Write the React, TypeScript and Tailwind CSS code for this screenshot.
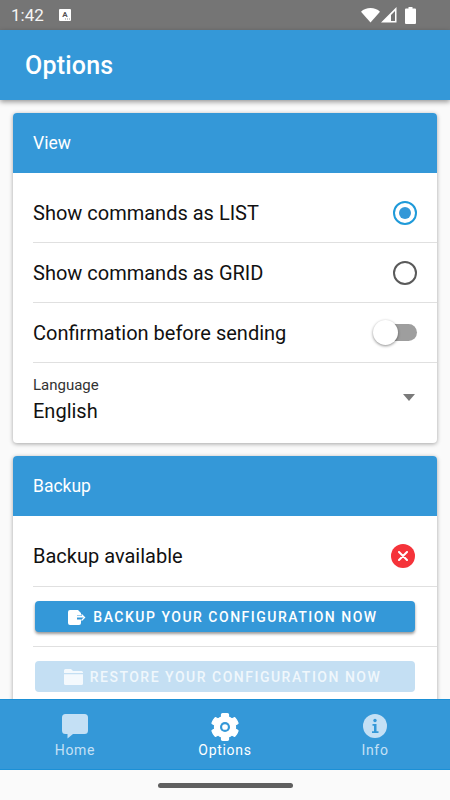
import React from "react";

const font = { fontFamily: "Roboto, sans-serif" };

function Row({ h, divider = true, children }: { h: string; divider?: boolean; children: React.ReactNode }) {
  return (
    <div className={`ml-5 flex items-center justify-between pr-5 ${h} ${divider ? "border-b border-[#e0e0e0]" : ""}`}>
      {children}
    </div>
  );
}

function Card({ title, children }: { title: string; children: React.ReactNode }) {
  return (
    <section className="mx-[13px] shrink-0 overflow-hidden rounded-[4px] bg-white shadow-[0_1px_4px_rgba(0,0,0,0.35)]">
      <div className="flex h-[60px] items-center bg-[#3498d8] px-5 text-[17.5px] text-white">{title}</div>
      {children}
    </section>
  );
}

function Gear() {
  return (
    <svg width="28" height="28" viewBox="0 0 512 512" fill="#fff">
      <path
        stroke="#fff"
        strokeWidth="22"
        strokeLinejoin="round"
        d="M487.4 315.7l-42.600-24.600c4.300-23.200 4.300-47 0-70.200l42.600-24.600c4.900-2.800 7.100-8.600 5.500-14-11.100-35.600-30-67.800-54.700-94.600-3.800-4.100-10-5.100-14.800-2.300L380.800 110c-17.900-15.400-38.500-27.300-60.800-35.100V25.800c0-5.600-3.900-10.500-9.400-11.700-36.700-8.200-74.300-7.800-109.200 0-5.500 1.200-9.400 6.100-9.400 11.700V75c-22.200 7.900-42.800 19.800-60.800 35.100L88.700 85.500c-4.900-2.800-11-1.900-14.800 2.300-24.700 26.700-43.600 58.900-54.700 94.600-1.700 5.400.6 11.200 5.500 14L67.300 221c-4.300 23.200-4.300 47 0 70.200l-42.600 24.600c-4.900 2.800-7.100 8.600-5.500 14 11.100 35.600 30 67.800 54.700 94.600 3.800 4.100 10 5.100 14.800 2.300l42.600-24.600c17.900 15.400 38.500 27.300 60.800 35.100v49.200c0 5.600 3.900 10.500 9.400 11.700 36.700 8.200 74.300 7.800 109.200 0 5.500-1.200 9.400-6.100 9.400-11.700v-49.200c22.200-7.900 42.800-19.800 60.800-35.100l42.600 24.600c4.900 2.800 11 1.900 14.800-2.300 24.700-26.700 43.600-58.900 54.700-94.600 1.500-5.500-.7-11.300-5.600-14.100z"
      />
      <circle cx="256" cy="256" r="92" fill="#3498d8" />
      <circle cx="256" cy="256" r="52" fill="#fff" />
    </svg>
  );
}

export default function App() {
  return (
    <div className="flex h-[800px] w-[450px] flex-col overflow-hidden bg-[#fafafa]" style={font}>
      {/* Status bar */}
      <div className="flex h-[30px] shrink-0 items-center bg-[#757575] pl-[11px] pr-[34px] text-white">
        <span className="text-[17px] leading-none text-[#f5f5f5]">1:42</span>
        <svg className="ml-[15px]" width="12" height="12" viewBox="0 0 12 12">
          <rect width="12" height="12" rx="1" fill="#fff" />
          <text x="6" y="8" textAnchor="middle" fontSize="8" fontWeight="700" fill="#555" fontFamily="Roboto, sans-serif">A</text>
          <path d="M6 10h1M8 10h1M10 10h1" stroke="#999" strokeWidth="1" />
        </svg>
        <div className="ml-auto flex items-center">
          <svg width="19" height="16" viewBox="0 0 19 16">
            <path d="M0 4.800C2.500 2.200 5.800 1 9.500 1s7 1.200 9.500 3.800L9.500 15.500z" fill="#fff" />
          </svg>
          <svg className="ml-[1px]" width="16" height="16" viewBox="0 0 16 16">
            <path fillRule="evenodd" d="M0 15.500 15.500 0v15.500zM10 14h4V4l-4 4z" fill="#fff" />
          </svg>
          <svg className="ml-[8px]" width="11" height="17" viewBox="0 0 11 17">
            <path d="M3.500 0h4v1.500H10a1 1 0 0 1 1 1V16a1 1 0 0 1-1 1H1a1 1 0 0 1-1-1V2.500a1 1 0 0 1 1-1h2.500z" fill="#fff" />
          </svg>
        </div>
      </div>

      {/* App bar */}
      <header className="relative z-10 flex h-[70px] shrink-0 items-center bg-[#3498d8] px-[25px] pt-[1px] text-[25px] font-medium tracking-[0.2px] text-white shadow-[0_2px_5px_rgba(0,0,0,0.4)]">
        Options
      </header>

      {/* Scrolling content */}
      <main className="flex min-h-0 flex-1 flex-col gap-[13px] overflow-hidden pt-[13px] text-[20px] text-[#111]">
        <Card title="View">
          <Row h="h-[70px] pt-[10px]">
            <span>Show commands as LIST</span>
            <span className="flex h-6 w-6 items-center justify-center rounded-full border-2 border-[#1f9ad9]">
              <span className="h-3 w-3 rounded-full bg-[#3498d8]" />
            </span>
          </Row>
          <Row h="h-[60px]">
            <span>Show commands as GRID</span>
            <span className="h-6 w-6 rounded-full border-2 border-[#5a5a5a]" />
          </Row>
          <Row h="h-[60px]">
            <span>Confirmation before sending</span>
            <span className="relative h-[17px] w-[34px] rounded-full bg-[#9e9e9e]">
              <span className="absolute left-[-10px] top-[-4px] h-[25px] w-[25px] rounded-full bg-white shadow-[0_1px_3px_rgba(0,0,0,0.45)]" />
            </span>
          </Row>
          <Row h="h-[80px] pb-[7px]" divider={false}>
            <div className="flex flex-col">
              <span className="text-[15px] leading-[18px] text-[#333]">Language</span>
              <span className="mt-[4px] leading-[26px]">English</span>
            </div>
            <span className="mb-[5px] mr-[2px] h-0 w-0 border-x-[6px] border-t-[7px] border-x-transparent border-t-[#7a7a7a]" />
          </Row>
        </Card>

        <Card title="Backup">
          <Row h="h-[71px] pt-[10px]">
            <span>Backup available</span>
            <span className="mr-[2px] flex h-6 w-6 items-center justify-center rounded-full bg-[#f5333a]">
              <svg width="10" height="10" viewBox="0 0 10 10">
                <path d="M1 1l8 8M9 1l-8 8" stroke="#fff" strokeWidth="2" strokeLinecap="round" />
              </svg>
            </span>
          </Row>
          <Row h="h-[60px]">
            <button className="mx-[2px] flex h-[31px] w-[380px] items-center justify-center gap-[7px] rounded-[4px] bg-[#3498d8] pr-[4px] pt-[1px] text-[14px] font-medium tracking-[1.5px] text-white shadow-[0_2px_3px_rgba(0,0,0,0.4)]">
              <svg width="18" height="15" viewBox="0 0 18 15" fill="#fff">
                <path d="M2 0h8l3 3v2.500H9v4h4V13a2 2 0 0 1-2 2H2a2 2 0 0 1-2-2V2a2 2 0 0 1 2-2z" />
                <path d="M9 6.750h6.500M13.500 4.500l3 3-3 3" fill="none" stroke="#fff" strokeWidth="1.300" />
              </svg>
              BACKUP YOUR CONFIGURATION NOW
            </button>
          </Row>
          <Row h="h-[60px]">
            <button className="mx-[2px] flex h-[31px] w-[380px] items-center justify-center gap-[7px] rounded-[4px] bg-[#c4dff3] pr-[5px] pt-[1px] text-[14px] font-medium tracking-[1.5px] text-[#f0f7fc]">
              <svg width="19" height="16" viewBox="0 0 19 16" fill="#f4f9fd">
                <path d="M1.500 0h5.500l2 2h8.500A1.500 1.500 0 0 1 19 3.500V4H0V1.500A1.500 1.500 0 0 1 1.500 0z" />
                <path d="M0 5.200h19v9.300a1.500 1.500 0 0 1-1.500 1.500h-16A1.500 1.500 0 0 1 0 14.500z" />
              </svg>
              RESTORE YOUR CONFIGURATION NOW
            </button>
          </Row>
        </Card>
      </main>

      {/* Bottom navigation */}
      <nav className="grid h-[71px] shrink-0 grid-cols-3 border-y border-[#1b90d6] bg-[#3498d8] text-[14px] tracking-[0.7px]">
        <div className="flex flex-col items-center pt-[14px] text-[#c4e0f5]">
          <svg width="26" height="25" viewBox="0 0 26 25" fill="#c4e0f5">
            <path d="M3.500 0h19A3.500 3.500 0 0 1 26 3.500v13a3.500 3.500 0 0 1-3.500 3.500H11l-5.500 4.500V20H3.500A3.500 3.500 0 0 1 0 16.500v-13A3.500 3.500 0 0 1 3.500 0z" />
          </svg>
          <span className="mt-[2px] leading-[18px]">Home</span>
        </div>
        <div className="flex flex-col items-center pt-[13px] text-white">
          <Gear />
          <span className="leading-[18px]">Options</span>
        </div>
        <div className="flex flex-col items-center pt-[14px] text-[#c4e0f5]">
          <span className="flex h-6 w-6 items-center justify-center rounded-full bg-[#c4e0f5]">
            <svg width="10" height="16" viewBox="0 0 10 16" fill="#3498d8">
              <circle cx="5" cy="2.500" r="1.700" />
              <path d="M2.500 6h4v7.200H8.500V15h-6.500v-1.800h2V7.800H2.500z" />
            </svg>
          </span>
          <span className="mt-[3px] leading-[18px]">Info</span>
        </div>
      </nav>

      {/* Gesture bar */}
      <div className="flex h-[30px] shrink-0 items-start justify-center bg-[#fafafa] pt-[13px]">
        <span className="h-[5px] w-[135px] rounded-full bg-[#5f5f5f]" />
      </div>
    </div>
  );
}
